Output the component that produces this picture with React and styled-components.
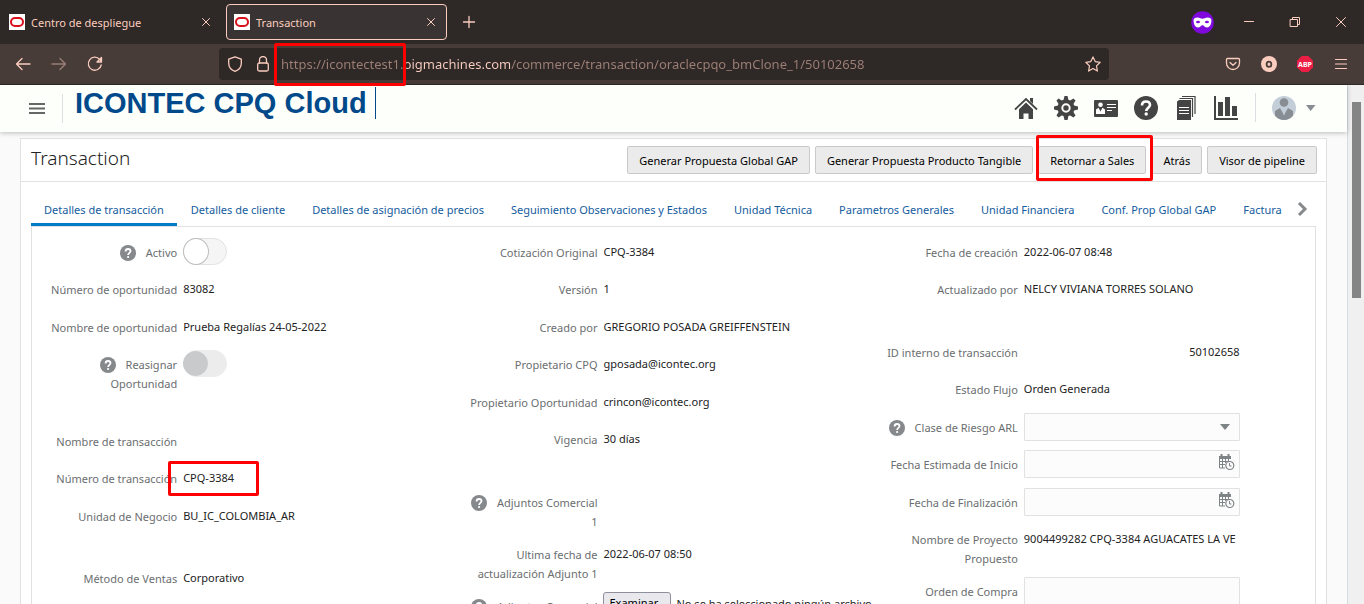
import React from "react";
import styled, { createGlobalStyle, css } from "styled-components";

const GlobalStyle = createGlobalStyle`
  *, *::before, *::after { box-sizing: border-box; }
  body { margin: 0; font-family: "Noto Sans", "Open Sans", sans-serif; font-size: 11px; color: #222; }
  button, input, select { font: inherit; }
`;

const ink = "#fbcdbf";

/* ---------- browser window ---------- */

const Window = styled.div`
  display: flex;
  flex-direction: column;
  height: 100vh;
  overflow: hidden;
  background: #fff;
`;

const TabStrip = styled.div`
  flex: none;
  display: flex;
  align-items: center;
  height: 44px;
  background: #2e2826;
  color: ${ink};
`;

const BrowserTab = styled.div`
  display: flex;
  align-items: center;
  gap: 6px;
  width: ${(p) => (p.$active ? 221 : 226)}px;
  height: 36px;
  padding: ${(p) => (p.$active ? "0 7px" : "0 12px 0 9px")};
  border: ${(p) => (p.$active ? `1px solid ${ink}` : "0")};
  border-radius: 4px;
  background: ${(p) => (p.$active ? "#393433" : "transparent")};
  span { flex: 1; white-space: nowrap; }
`;

const ChromeButton = styled.button`
  flex: none;
  display: grid;
  place-items: center;
  width: ${(p) => p.$w || 16}px;
  height: ${(p) => p.$h || 16}px;
  padding: 0;
  border: 0;
  background: none;
  color: ${ink};
  opacity: ${(p) => (p.disabled ? 0.45 : 1)};
`;

const WindowControls = styled.div`
  display: flex;
  align-items: center;
  margin-left: auto;
  svg { flex: none; }
`;

const PrivateBadge = styled.div`
  display: flex;
  margin-right: 12px;
`;

const NavBar = styled.div`
  flex: none;
  display: flex;
  align-items: center;
  height: 41px;
  padding: 0 5px;
  border-bottom: 1px solid #2e2826;
  background: #473c38;
`;

const NavGroup = styled.div`
  display: flex;
  align-items: center;
`;

const AddressBar = styled.div`
  flex: 1;
  display: flex;
  align-items: center;
  height: 32px;
  margin: 0 106px;
  padding: 0 8px;
  border-radius: 4px;
  background: #2e2826;
  color: ${ink};
`;

const AddressIcons = styled.div`
  display: flex;
  gap: 12px;
  padding-right: 10px;
`;

const UrlField = styled.div`
  position: relative;
  flex: 1;
`;

const UrlInput = styled.input`
  display: block;
  width: 100%;
  height: 32px;
  padding: 0;
  border: 0;
  outline: 0;
  font-size: 13px;
  background: linear-gradient(to right, #9d7f76 122px, ${ink} 122px, ${ink} 229px, #9d7f76 229px);
  -webkit-background-clip: text;
  background-clip: text;
  -webkit-text-fill-color: transparent;
`;

const Highlight = styled.span`
  position: absolute;
  z-index: 5;
  top: ${(p) => p.$top}px;
  left: ${(p) => p.$left}px;
  width: ${(p) => p.$w};
  height: ${(p) => p.$h}px;
  border: 3px solid #ff0000;
  border-radius: 2px;
  pointer-events: none;
`;

/* ---------- web page ---------- */

const Viewport = styled.div`
  flex: 1;
  display: flex;
  min-height: 0;
`;

const Page = styled.div`
  flex: 1;
  display: flex;
  flex-direction: column;
  min-width: 0;
  border-right: 1px solid #d5dde3;
  background: #fafafa;
`;

const ScrollTrack = styled.div`
  flex: none;
  width: 16px;
  padding: 17px 3px 0 4px;
  background: #f0f0f0;
`;

const ScrollThumb = styled.div`
  height: 196px;
  background: #858585;
`;

const AppHeader = styled.header`
  position: relative;
  z-index: 2;
  flex: none;
  display: flex;
  align-items: center;
  height: 47px;
  padding: 0 31px 0 29px;
  background: #fdfffb;
  box-shadow: 0 1px 5px rgba(0, 0, 0, 0.25);
`;

const IconButton = styled.button`
  display: grid;
  place-items: center;
  padding: 0;
  border: 0;
  background: none;
  color: ${(p) => p.$color || "#444"};
`;

const Divider = styled.span`
  width: 1px;
  height: 29px;
  margin: 0 ${(p) => p.$right}px 0 ${(p) => p.$left}px;
  background: #dcdfe0;
`;

const Brand = styled.h1`
  align-self: flex-start;
  height: 32px;
  margin: 2px 0 0;
  padding-right: 8px;
  border-right: 1px solid #00498a;
  font: bold 29px/32px "Liberation Sans", Arial, sans-serif;
  color: #00498a;
  white-space: nowrap;
`;

const HeaderTools = styled.nav`
  display: flex;
  align-items: center;
  gap: 16px;
  margin-left: auto;
  padding-bottom: 2px;
`;

const AccountButton = styled(IconButton)`
  display: flex;
  align-items: center;
  gap: 10px;
`;

const Content = styled.main`
  flex: 1;
  display: flex;
  flex-direction: column;
  min-height: 0;
  margin: 6px 20px 0;
`;

const TitleBar = styled.div`
  flex: none;
  display: flex;
  align-items: center;
  justify-content: space-between;
  height: 44px;
  padding: 0 9px 0 10px;
  border: 1px solid #e1e1e1;
  background: #fff;
`;

const Title = styled.h2`
  margin: 0;
  padding-bottom: 4px;
  font-size: 19px;
  font-weight: 300;
  line-height: 28px;
  color: #222;
`;

const Actions = styled.div`
  display: flex;
  gap: 5px;
`;

const ActionSlot = styled.div`
  position: relative;
`;

const ActionButton = styled.button`
  height: 28px;
  padding: 0 11px;
  border: 1px solid #c9c9c9;
  border-radius: 2px;
  background: #ebebeb;
  color: #000;
  white-space: nowrap;
`;

const Body = styled.div`
  flex: 1;
  display: flex;
  flex-direction: column;
  min-height: 0;
  padding: 10px 10px 0;
  border: solid #e1e1e1;
  border-width: 0 1px;
  background: #fff;
`;

const TabRow = styled.div`
  flex: none;
  display: flex;
  align-items: center;
  height: 34px;
`;

const TabList = styled.div`
  flex: 1;
  display: flex;
  gap: 1px;
  min-width: 0;
  overflow: hidden;
`;

const TabButton = styled.button`
  flex: none;
  height: 34px;
  padding: 4px 13px 0;
  border: 0;
  border-bottom: 3px solid ${(p) => (p["aria-selected"] ? "#007bc8" : "transparent")};
  background: none;
  color: #145c9e;
  white-space: nowrap;
`;

const Panel = styled.form`
  flex: 1;
  display: grid;
  grid-template-columns: repeat(3, minmax(0, 1fr));
  align-items: start;
  min-height: 0;
  padding: 11px;
  overflow: hidden;
  border: solid #dfe2e4;
  border-width: 1px 1px 0;
`;

const Column = styled.div`
  display: flex;
  flex-direction: column;
`;

const Row = styled.div`
  display: grid;
  grid-template-columns: minmax(0, 136fr) minmax(0, 284fr);
  column-gap: 6px;
  align-items: start;
  min-height: 38px;
  padding-bottom: 9px;
  &:nth-child(odd) { min-height: 37px; }
  ${(p) => p.$sectionEnd && css`margin-bottom: 25px;`}
`;

const FieldLabel = styled.label`
  padding-top: 5px;
  line-height: 19px;
  text-align: right;
  color: #6b6e70;
`;

const HelpIcon = styled.svg`
  width: 16px;
  height: 16px;
  margin-right: 10px;
  vertical-align: -4px;
`;

const Control = styled.div`
  position: relative;
  width: 77%;
`;

const Value = styled.output`
  display: block;
  padding-top: 4px;
  line-height: 19px;
  text-align: ${(p) => (p.$numeric ? "right" : "left")};
  white-space: nowrap;
  overflow: ${(p) => (p.$clip ? "hidden" : "visible")};
`;

const Switch = styled.input`
  appearance: none;
  display: block;
  position: relative;
  width: 44px;
  height: 27px;
  margin: 0;
  border: 1px solid ${(p) => (p.disabled ? "#ececec" : "#e2e2e2")};
  border-radius: 14px;
  background: ${(p) => (p.disabled ? "#ececec" : "#f5f5f5")};
  &::before {
    content: "";
    position: absolute;
    top: ${(p) => (p.disabled ? 0 : -1)}px;
    left: -1px;
    width: ${(p) => (p.disabled ? 25 : 26)}px;
    height: ${(p) => (p.disabled ? 25 : 27)}px;
    border: 1px solid ${(p) => (p.disabled ? "#c8cacb" : "#bdbdbd")};
    border-radius: 50%;
    background: ${(p) => (p.disabled ? "#c8cacb" : "#fff")};
  }
`;

const fieldBox = css`
  display: block;
  width: 100%;
  height: 28px;
  padding: 0 30px 0 6px;
  border: 1px solid #dfe1e2;
  border-radius: 1px;
  background: #fcfcfc;
  color: #222;
`;

const TextInput = styled.input`${fieldBox}`;
const SelectInput = styled.select`${fieldBox} appearance: none;`;

const FieldIcon = styled.svg`
  position: absolute;
  top: 4px;
  right: 5px;
  pointer-events: none;
`;

const FilePicker = styled.div`
  display: flex;
  align-items: center;
  gap: 5px;
  white-space: nowrap;
  input { position: absolute; opacity: 0; width: 1px; height: 1px; }
`;

const FileButton = styled.label`
  flex: none;
  width: 68px;
  height: 22px;
  padding: 0 5px;
  border: 1px solid #8f8f9d;
  border-radius: 3px;
  background: #e9e9ed;
  color: #000;
  line-height: 20px;
`;

/* ---------- drawings ---------- */

const Favicon = () => (
  <svg width="16" height="16" viewBox="0 0 16 16">
    <rect width="16" height="16" fill="#fff" />
    <rect x="2" y="4" width="12" height="8" rx="4" fill="none" stroke="#d9101b" strokeWidth="2" />
  </svg>
);

const Line = ({ d, w = 1, children }) => (
  <svg width="16" height="16" viewBox="0 0 16 16" fill="none" stroke="currentColor" strokeWidth={w} strokeLinecap="round" strokeLinejoin="round">
    {d && <path d={d} />}
    {children}
  </svg>
);

const CloseGlyph = () => <Line d="M4.5 4.5l7 7M11.5 4.5l-7 7" />;

const PrivateMask = () => (
  <svg width="23" height="23" viewBox="0 0 23 23">
    <circle cx="11.5" cy="11.5" r="11.3" fill="#7f09dc" />
    <path d="M2.6 9.5c0-2.2 1.5-3 3.8-3 2.4 0 3.4 1.3 5.1 1.3s2.7-1.3 5.1-1.3c2.3 0 3.8.8 3.8 3 0 4-1.8 7-4.3 7-2.3 0-3-2.3-4.6-2.3s-2.3 2.3-4.6 2.3c-2.5 0-4.3-3-4.3-7z" fill="#fff" />
    <path d="M4.8 11c1.2-1.7 3.3-1.7 4.5 0-1.2 1.6-3.3 1.6-4.5 0zM13.7 11c1.2-1.7 3.3-1.7 4.5 0-1.2 1.6-3.3 1.6-4.5 0z" fill="#7f09dc" />
  </svg>
);

const HomeIcon = () => (
  <svg width="24" height="24" viewBox="0 0 24 24">
    <path d="M1 13.5L12 3l11 10.5" fill="none" stroke="currentColor" strokeWidth="1.8" />
    <path d="M16 2h3v6l-3-3z" fill="currentColor" />
    <path d="M12 6.5l7 6.7V23h-4.5v-5.5h-5V23H5v-9.800z" fill="currentColor" />
  </svg>
);

const GearIcon = () => (
  <svg width="24" height="24" viewBox="0 0 24 24">
    <g fill="currentColor">
      {[0, 45, 90, 135].map((a) => (
        <path key={a} d="M10.5 0h3l1.200 5v14l-1.200 5h-3l-1.200-5V5z" transform={`rotate(${a} 12 12)`} />
      ))}
      <circle cx="12" cy="12" r="8.5" />
    </g>
    <circle cx="12" cy="12" r="3.7" fill="none" stroke="#fdfffb" strokeWidth="2" />
  </svg>
);

const CardIcon = () => (
  <svg width="24" height="24" viewBox="0 0 24 24">
    <rect x="0" y="4" width="24" height="17" rx="1" fill="currentColor" />
    <circle cx="6.5" cy="8.8" r="2.3" fill="#fff" />
    <path d="M2 18v-4.500l2.500-1.800 2 3.800 2-3.800 2.500 1.800V18z" fill="#fff" />
    <path d="M13 8.5h9M13 11.5h9M13 14.5h5" stroke="#fff" strokeWidth="1" />
  </svg>
);

const HelpCircle = () => (
  <svg width="24" height="24" viewBox="0 0 24 24">
    <circle cx="12" cy="12" r="12" fill="currentColor" />
    <path d="M8 9.5c0-2.500 1.700-4 4-4s4 1.400 4 3.500c0 2.600-3.700 3-3.700 6" fill="none" stroke="#fff" strokeWidth="2.6" />
    <circle cx="12.2" cy="18" r="1.7" fill="#fff" />
  </svg>
);

const DocsIcon = () => (
  <svg width="24" height="24" viewBox="0 0 24 24">
    <path d="M3 5.5L5 4h12v20H3z" fill="currentColor" />
    <path d="M5.5 2.5h13V21M8 .5h13V18" fill="none" stroke="currentColor" strokeWidth="1.2" />
    <path d="M5 11.5h10M5 14.5h10M5 17.5h10" stroke="#fff" strokeWidth="1.1" />
  </svg>
);

const ChartIcon = () => (
  <svg width="24" height="24" viewBox="0 0 24 24" fill="currentColor">
    <path d="M0 0h2v22h22v2H0zM4 6h5v14H4zM11 1h5v19h-5zM18 10h5v10h-5z" />
  </svg>
);

const AvatarIcon = () => (
  <svg width="24" height="24" viewBox="0 0 24 24">
    <circle cx="12" cy="12" r="12" fill="#c3ced8" />
    <circle cx="12" cy="6.5" r="4.3" fill="#878d92" />
    <path d="M3 15l5-3 4 7 4-7 5 3v4.500A12 12 0 0 1 12 24 12 12 0 0 1 3 19.500z" fill="#878d92" />
    <path d="M10.5 13h3l-1.500 7z" fill="#c3ced8" />
  </svg>
);

const Help = () => (
  <HelpIcon viewBox="0 0 16 16" role="img" aria-label="Ayuda">
    <circle cx="8" cy="8" r="8" fill="#85898c" />
    <path d="M5.6 6.4C5.6 4.7 6.6 4 8 4s2.5.8 2.5 2.100C10.5 7.8 8.100 7.900 8.100 10" fill="none" stroke="#fff" strokeWidth="1.8" />
    <circle cx="8.1" cy="12" r="1.1" fill="#fff" />
  </HelpIcon>
);

const CalendarClock = () => (
  <FieldIcon width="17" height="17" viewBox="0 0 17 17" fill="none" stroke="#7e8386">
    <path d="M1 2h12v3H1z" fill="#7e8386" stroke="none" />
    <path d="M3.5 0v3M10.5 0v3" strokeWidth="2" />
    <path d="M1.5 4v10H7M1.5 7.500H12M1.5 10.500H7M4.5 5v9M7.5 5v4M10.5 5v2" />
    <circle cx="11.8" cy="11.5" r="4" fill="#fcfcfc" strokeWidth="1.2" />
    <path d="M11.5 9v3h2" />
  </FieldIcon>
);

/* ---------- data ---------- */

const columns = [
  [
    { id: "activo", label: "Activo", help: true, type: "switch" },
    { id: "num-oportunidad", label: "Número de oportunidad", value: "83082" },
    { id: "nom-oportunidad", label: "Nombre de oportunidad", value: "Prueba Regalías 24-05-2022" },
    { id: "reasignar", label: "Reasignar Oportunidad", help: true, type: "switch", disabled: true, sectionEnd: true },
    { id: "nom-transaccion", label: "Nombre de transacción", value: "" },
    { id: "num-transaccion", label: "Número de transacción", value: "CPQ-3384", highlight: true },
    { id: "unidad-negocio", label: "Unidad de Negocio", value: "BU_IC_COLOMBIA_AR", sectionEnd: true },
    { id: "metodo-ventas", label: "Método de Ventas", value: "Corporativo" },
  ],
  [
    { id: "cotizacion", label: "Cotización Original", value: "CPQ-3384" },
    { id: "version", label: "Versión", value: "1" },
    { id: "creado-por", label: "Creado por", value: "GREGORIO POSADA GREIFFENSTEIN" },
    { id: "prop-cpq", label: "Propietario CPQ", value: "gposada@icontec.org" },
    { id: "prop-oportunidad", label: "Propietario Oportunidad", value: "crincon@icontec.org" },
    { id: "vigencia", label: "Vigencia", value: "30 días", sectionEnd: true },
    { id: "adjuntos-1", label: "Adjuntos Comercial 1", help: true, value: "" },
    { id: "fecha-adjunto-1", label: "Ultima fecha de actualización Adjunto 1", value: "2022-06-07 08:50" },
    { id: "adjuntos-2", label: "Adjuntos Comercial", help: true, type: "file" },
  ],
  [
    { id: "fecha-creacion", label: "Fecha de creación", value: "2022-06-07 08:48" },
    { id: "actualizado", label: "Actualizado por", value: "NELCY VIVIANA TORRES SOLANO", sectionEnd: true },
    { id: "id-interno", label: "ID interno de transacción", value: "50102658", numeric: true },
    { id: "estado", label: "Estado Flujo", value: "Orden Generada" },
    { id: "riesgo", label: "Clase de Riesgo ARL", help: true, type: "select" },
    { id: "fecha-inicio", label: "Fecha Estimada de Inicio", type: "date" },
    { id: "fecha-fin", label: "Fecha de Finalización", type: "date" },
    { id: "proyecto", label: "Nombre de Proyecto Propuesto", value: "9004499282 CPQ-3384 AGUACATES LA VE", clip: true },
    { id: "orden", label: "Orden de Compra", type: "text" },
  ],
];

const tabs = [
  "Detalles de transacción",
  "Detalles de cliente",
  "Detalles de asignación de precios",
  "Seguimiento Observaciones y Estados",
  "Unidad Técnica",
  "Parametros Generales",
  "Unidad Financiera",
  "Conf. Prop Global GAP",
  "Factura",
];

const actions = [
  { text: "Generar Propuesta Global GAP" },
  { text: "Generar Propuesta Producto Tangible" },
  { text: "Retornar a Sales", highlight: true },
  { text: "Atrás" },
  { text: "Visor de pipeline" },
];

function FieldControl({ field }) {
  const { id, type } = field;
  if (type === "switch") return <Switch id={id} type="checkbox" role="switch" disabled={field.disabled} />;
  if (type === "select")
    return (
      <>
        <SelectInput id={id} defaultValue=""><option value="" /></SelectInput>
        <FieldIcon width="20" height="20" viewBox="0 0 20 20"><path d="M5 7h10l-5 6z" fill="#7e8386" /></FieldIcon>
      </>
    );
  if (type === "date") return (<><TextInput id={id} type="text" /><CalendarClock /></>);
  if (type === "text") return <TextInput id={id} type="text" />;
  if (type === "file")
    return (
      <FilePicker>
        <input id={id} type="file" />
        <FileButton htmlFor={id}>Examinar...</FileButton>
        <span>No se ha seleccionado ningún archivo.</span>
      </FilePicker>
    );
  return (
    <>
      <Value id={id} $numeric={field.numeric} $clip={field.clip}>{field.value}</Value>
      {field.highlight && <Highlight $top={-3} $left={-15} $w="91px" $h={35} />}
    </>
  );
}

export default function App() {
  return (
    <Window>
      <GlobalStyle />
      <TabStrip>
        <BrowserTab>
          <Favicon /><span>Centro de despliegue</span>
          <ChromeButton aria-label="Cerrar pestaña"><CloseGlyph /></ChromeButton>
        </BrowserTab>
        <BrowserTab $active>
          <Favicon /><span>Transaction</span>
          <ChromeButton aria-label="Cerrar pestaña"><CloseGlyph /></ChromeButton>
        </BrowserTab>
        <ChromeButton $w={44} $h={36} aria-label="Nueva pestaña"><Line d="M8 2.5v11M2.5 8h11" w={1.3} /></ChromeButton>
        <WindowControls>
          <PrivateBadge><PrivateMask /></PrivateBadge>
          <ChromeButton $w={46} $h={36} aria-label="Minimizar"><Line d="M3.5 7.5h9" /></ChromeButton>
          <ChromeButton $w={46} $h={36} aria-label="Restaurar"><Line d="M3.5 5.5h7v7h-7zM5.5 5V3.5h7v7H11" /></ChromeButton>
          <ChromeButton $w={46} $h={36} aria-label="Cerrar"><Line d="M3.5 3.5l9 9M12.5 3.5l-9 9" /></ChromeButton>
        </WindowControls>
      </TabStrip>

      <NavBar>
        <NavGroup>
          <ChromeButton $w={36} $h={32} aria-label="Atrás"><Line d="M15 8H1.5M7 2.5L1.5 8 7 13.5" w={1.3} /></ChromeButton>
          <ChromeButton $w={36} $h={32} disabled aria-label="Adelante"><Line d="M1 8h13.500M9 2.500L14.500 8 9 13.500" w={1.3} /></ChromeButton>
          <ChromeButton $w={36} $h={32} aria-label="Recargar"><Line d="M14.200 9A6.500 6.500 0 1 1 12.800 3.500L14.500 5.500M14.500 1.500v4.500H10z" w={1.3} /></ChromeButton>
        </NavGroup>
        <AddressBar>
          <AddressIcons>
            <Line d="M8 .8L14.300 3.200v4C14.300 11.500 11.500 14 8 15.300 4.500 14 1.700 11.500 1.700 7.200v-4z" w={1.3} />
            <Line w={1.3} d="M4.5 7V4a3.500 3.500 0 0 1 7 0v3"><rect x="2.7" y="7" width="10.6" height="8" rx="1.5" /></Line>
          </AddressIcons>
          <UrlField>
            <UrlInput aria-label="Dirección" defaultValue="https://icontectest1.bigmachines.com/commerce/transaction/oraclecpqo_bmClone_1/50102658" />
            <Highlight $top={-5} $left={-7} $w="132px" $h={43} />
          </UrlField>
          <ChromeButton aria-label="Marcador"><Line d="M8 .9l2.200 4.700 5 .7-3.700 3.600.9 5.200L8 12.600l-4.400 2.500.9-5.200L.8 6.300l5-.7z" w={1.2} /></ChromeButton>
        </AddressBar>
        <NavGroup>
          <ChromeButton $w={36} $h={32} aria-label="Pocket"><Line d="M2.5 2.5h11a1 1 0 0 1 1 1V7a6.500 6.500 0 0 1-13 0V3.500a1 1 0 0 1 1-1zM5 6.500l3 2.800 3-2.800" w={1.3} /></ChromeButton>
          <ChromeButton $w={36} $h={32} aria-label="Cuenta">
            <svg width="16" height="16" viewBox="0 0 16 16"><circle cx="8" cy="8" r="8" fill={ink} /><ellipse cx="8" cy="8.3" rx="2.4" ry="2.6" fill="none" stroke="#473c38" strokeWidth="1.8" /></svg>
          </ChromeButton>
          <ChromeButton $w={36} $h={32} aria-label="Adblock Plus">
            <svg width="16" height="16" viewBox="0 0 16 16"><path d="M4.700 0h6.600L16 4.700v6.600L11.300 16H4.700L0 11.300V4.700z" fill="#ed1e45" /><text x="8" y="11" textAnchor="middle" fontSize="7" fontWeight="700" fill="#fff">ABP</text></svg>
          </ChromeButton>
          <ChromeButton $w={36} $h={32} aria-label="Menú"><Line d="M2.5 3.5h11M2.5 8h11M2.5 12.500h11" w={1.2} /></ChromeButton>
        </NavGroup>
      </NavBar>

      <Viewport>
        <Page>
          <AppHeader>
            <IconButton aria-label="Menú de navegación" $color="#666">
              <svg width="16" height="11" viewBox="0 0 16 11"><path d="M0 1h16M0 5.500h16M0 10h16" stroke="currentColor" strokeWidth="2" /></svg>
            </IconButton>
            <Divider $left={17} $right={12} />
            <Brand>ICONTEC CPQ Cloud</Brand>
            <HeaderTools>
              <IconButton aria-label="Inicio"><HomeIcon /></IconButton>
              <IconButton aria-label="Configuración"><GearIcon /></IconButton>
              <IconButton aria-label="Perfil"><CardIcon /></IconButton>
              <IconButton aria-label="Ayuda"><HelpCircle /></IconButton>
              <IconButton aria-label="Documentos"><DocsIcon /></IconButton>
              <IconButton aria-label="Informes"><ChartIcon /></IconButton>
              <Divider $left={1} $right={0} />
              <AccountButton aria-label="Cuenta de usuario" $color="#878d92">
                <AvatarIcon />
                <svg width="10" height="6" viewBox="0 0 10 6"><path d="M0 0h9.500L4.700 6z" fill="currentColor" /></svg>
              </AccountButton>
            </HeaderTools>
          </AppHeader>

          <Content>
            <TitleBar>
              <Title>Transaction</Title>
              <Actions>
                {actions.map((a) => (
                  <ActionSlot key={a.text}>
                    <ActionButton>{a.text}</ActionButton>
                    {a.highlight && <Highlight $top={-11} $left={-2} $w="calc(100% + 9px)" $h={46} />}
                  </ActionSlot>
                ))}
              </Actions>
            </TitleBar>
            <Body>
              <TabRow>
                <TabList role="tablist">
                  {tabs.map((t, i) => (
                    <TabButton key={t} type="button" role="tab" aria-selected={i === 0}>{t}</TabButton>
                  ))}
                </TabList>
                <IconButton aria-label="Más pestañas" $color="#85898c">
                  <svg width="20" height="16" viewBox="0 0 20 16"><path d="M3 2l6 6-6 6" fill="none" stroke="currentColor" strokeWidth="3" /></svg>
                </IconButton>
              </TabRow>
              <Panel>
                {columns.map((fields, i) => (
                  <Column key={i}>
                    {fields.map((f) => (
                      <Row key={f.id} $sectionEnd={f.sectionEnd}>
                        <FieldLabel htmlFor={f.id}>{f.help && <Help />}{f.label}</FieldLabel>
                        <Control><FieldControl field={f} /></Control>
                      </Row>
                    ))}
                  </Column>
                ))}
              </Panel>
            </Body>
          </Content>
        </Page>
        <ScrollTrack><ScrollThumb /></ScrollTrack>
      </Viewport>
    </Window>
  );
}
